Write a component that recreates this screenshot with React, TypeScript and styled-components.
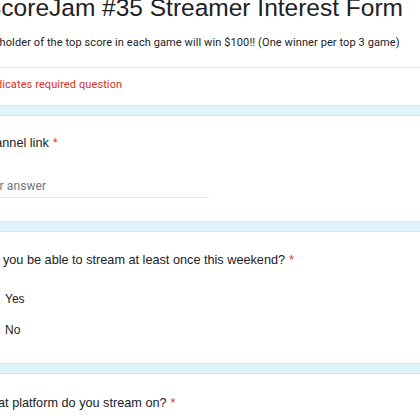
import React from "react";
import styled, { createGlobalStyle } from "styled-components";

const GlobalStyle = createGlobalStyle`
  html, body {
    margin: 0;
    padding: 0;
    background: #dff3fb;
    overflow: hidden;
  }
`;

const Page = styled.div`
  width: 420px;
  height: 420px;
  overflow: hidden;
  background: #dff3fb;
`;

// the form is scrolled so that its left edge sits just outside the window
const Column = styled.div`
  width: 560px;
  margin: -5px 0 0 -45px;
  display: flex;
  flex-direction: column;
  gap: 11px;
`;

const Card = styled.div<{ $pt?: number; $pb?: number }>`
  background: #fff;
  border-radius: 8px;
  box-shadow: 0 0 0 1px #d7e6ec;
  padding: ${({ $pt = 17 }) => $pt}px 24px ${({ $pb = 24 }) => $pb}px;
`;

const Title = styled.div`
  font-family: "Liberation Sans", Arial, sans-serif;
  font-size: 24.5px;
  line-height: 28px;
  color: #202124;
  margin-top: -1px;
  margin-left: 6px;
  white-space: nowrap;
`;

const Description = styled.div`
  font-family: Roboto, "Noto Sans", sans-serif;
  font-size: 11px;
  line-height: 16px;
  letter-spacing: 0.1px;
  color: #202124;
  margin-top: 13px;
  margin-left: -1px;
  white-space: nowrap;
`;

const Separator = styled.div`
  height: 1px;
  background: #e6e6e6;
  margin: 16px -24px 0;
`;

const RequiredNote = styled.div`
  font-family: Roboto, "Noto Sans", sans-serif;
  font-size: 11px;
  line-height: 16px;
  letter-spacing: 0.1px;
  color: #d93025;
  padding-top: 9px;
  padding-bottom: 12px;
`;

const Question = styled.div`
  font-family: "Liberation Sans", Arial, sans-serif;
  font-size: 12.7px;
  line-height: 20px;
  color: #202124;
`;

const Star = styled.span`
  color: #d93025;
  margin-left: 4px;
`;

const AnswerInput = styled.div`
  width: 230px;
  margin-top: 25px;
  padding-bottom: 3px;
  border-bottom: 1px solid #e8e8e8;
  font-family: Roboto, "Noto Sans", sans-serif;
  font-size: 12px;
  line-height: 16px;
  letter-spacing: 0.1px;
  color: #70757a;
`;

const Options = styled.div`
  margin-top: 13px;
  display: flex;
  flex-direction: column;
`;

const Option = styled.label`
  height: 31px;
  display: flex;
  align-items: center;
  gap: 6px;
  font-family: "Liberation Sans", Arial, sans-serif;
  font-size: 12px;
  line-height: 20px;
  color: #202124;
`;

const Radio = styled.span`
  width: 16px;
  height: 16px;
  border-radius: 50%;
  border: 2px solid #5f6368;
  flex: none;
`;

const choices = ["Yes", "No"];

export default function App() {
  return (
    <Page>
      <GlobalStyle />
      <Column>
        <Card $pt={0} $pb={0}>
          <Title>ScoreJam #35 Streamer Interest Form</Title>
          <Description>
            The holder of the top score in each game will win $100!! (One winner per top 3 game)
          </Description>
          <Separator />
          <RequiredNote>* Indicates required question</RequiredNote>
        </Card>

        <Card $pb={23}>
          <Question>
            Channel link<Star>*</Star>
          </Question>
          <AnswerInput>Your answer</AnswerInput>
        </Card>

        <Card $pt={18} $pb={18}>
          <Question>
            Will you be able to stream at least once this weekend?<Star>*</Star>
          </Question>
          <Options>
            {choices.map((c) => (
              <Option key={c}>
                <Radio />
                {c}
              </Option>
            ))}
          </Options>
        </Card>

        <Card $pt={19}>
          <Question>
            What platform do you stream on?<Star>*</Star>
          </Question>
        </Card>
      </Column>
    </Page>
  );
}
